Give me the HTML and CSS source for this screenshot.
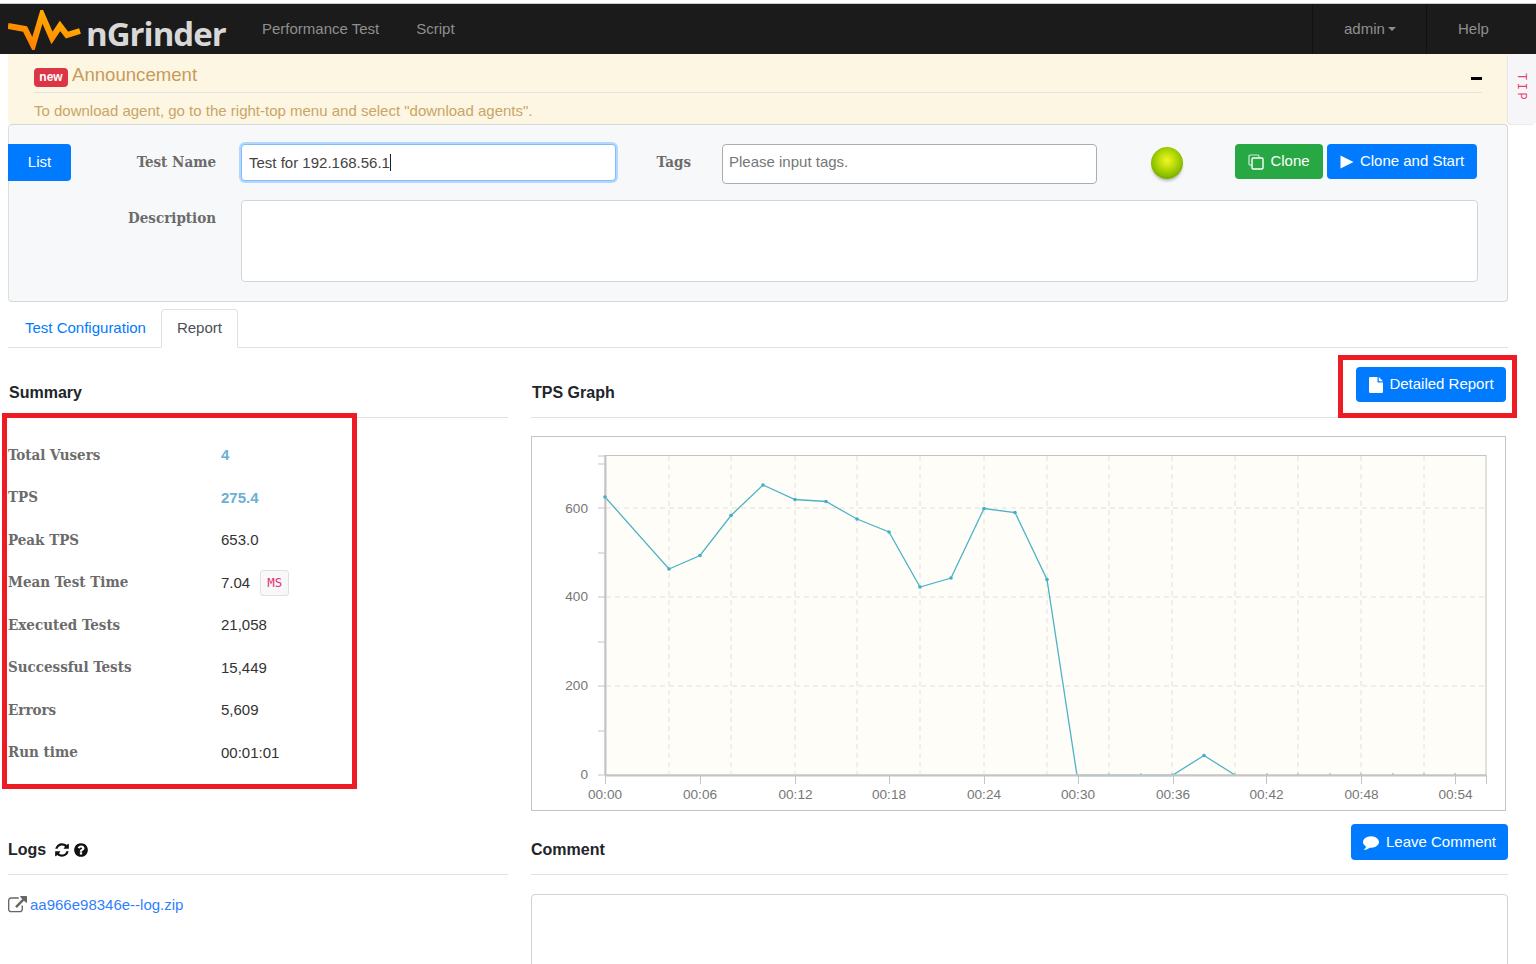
FILE: index.html
```html
<!DOCTYPE html>
<html lang="en">
<head>
<meta charset="utf-8">
<title>nGrinder</title>
<link rel="stylesheet" href="styles.css">
</head>
<body>
<nav class="nav">
  <a class="brand">
    <svg class="logo" viewBox="0 0 74 40" aria-hidden="true">
      <defs><linearGradient id="lg" x1="0" y1="1" x2="1" y2="0"><stop offset="0" stop-color="#ff7a00"/><stop offset=".6" stop-color="#ff9d00"/><stop offset="1" stop-color="#ffc000"/></linearGradient></defs>
      <polyline points="0,16 17,19 25,35 34,5 44,28 52,16 59,25 72,21" fill="none" stroke="url(#lg)" stroke-width="6" stroke-linejoin="miter"/>
    </svg>
    <span class="brand-name">nGrinder</span>
  </a>
  <a class="nav-link first">Performance Test</a>
  <a class="nav-link">Script</a>
  <div class="nav-right">
    <a class="nav-cell user">admin<i class="caret"></i></a>
    <a class="nav-cell help">Help</a>
  </div>
</nav>

<main class="main">
  <section class="announce">
    <div class="announce-head">
      <span class="badge">new</span>
      <span class="announce-title">Announcement</span>
      <b class="collapse"></b>
    </div>
    <p class="announce-text">To download agent, go to the right-top menu and select "download agents".</p>
  </section>
  <aside class="tip">TIP</aside>

  <section class="panel">
    <div class="row">
      <button class="btn list">List</button>
      <label class="lbl name-lbl">Test Name</label>
      <div class="input focus">Test for 192.168.56.1<i class="cursor"></i></div>
      <label class="lbl tags-lbl">Tags</label>
      <div class="input tags">Please input tags.</div>
      <span class="ball"></span>
      <button class="btn green clone">
        <svg class="ico" viewBox="0 0 16 16" aria-hidden="true"><path d="M11 3.500V2.200A1.200 1.200 0 0 0 9.800 1H2.200A1.200 1.200 0 0 0 1 2.200V10a1.200 1.200 0 0 0 1.200 1.200H3.500" fill="none" stroke="#cdeed5" stroke-width="1.200"/><rect x="4" y="4" width="11" height="11" rx="1.200" fill="none" stroke="#fff" stroke-width="1.400"/></svg>
        Clone</button>
      <button class="btn start">
        <svg class="ico play" viewBox="0 0 14 14" aria-hidden="true"><polygon points="0.500,0.500 13.500,7 0.500,13.500" fill="#fff"/></svg>
        Clone and Start</button>
    </div>
    <div class="row desc">
      <label class="lbl desc-lbl">Description</label>
      <div class="textarea"></div>
    </div>
  </section>

  <ul class="tabs">
    <li class="tab">Test Configuration</li>
    <li class="tab active">Report</li>
  </ul>

  <div class="report">
    <section class="col-left">
      <header class="sec-head"><h2>Summary</h2></header>
      <dl class="stats">
        <div class="stat"><dt>Total Vusers</dt><dd class="hi">4</dd></div>
        <div class="stat"><dt>TPS</dt><dd class="hi">275.4</dd></div>
        <div class="stat"><dt>Peak TPS</dt><dd>653.0</dd></div>
        <div class="stat"><dt>Mean Test Time</dt><dd>7.04<code class="unit">MS</code></dd></div>
        <div class="stat"><dt>Executed Tests</dt><dd>21,058</dd></div>
        <div class="stat"><dt>Successful Tests</dt><dd>15,449</dd></div>
        <div class="stat"><dt>Errors</dt><dd>5,609</dd></div>
        <div class="stat"><dt>Run time</dt><dd>00:01:01</dd></div>
      </dl>
    </section>
    <section class="col-right">
      <header class="sec-head graph-head">
        <h2>TPS Graph</h2>
        <button class="btn detail">
          <svg class="ico" viewBox="0 0 14 16" aria-hidden="true"><path d="M1 0H8.500V5.500H14V15a1 1 0 0 1-1 1H1a1 1 0 0 1-1-1V1a1 1 0 0 1 1-1zM9.800 0L14 4.200H9.800z" fill="#fff"/></svg>
          Detailed Report</button>
      </header>
      <div class="chart">
        <svg class="plot" viewBox="531 436 975 375" role="img" aria-label="TPS graph">
          <rect x="605" y="455.500" width="881" height="319.500" fill="#fffdf8" stroke="#c4c4c4"/>
          <g class="grid">
            <path d="M606 508H1486M606 597H1486M606 686H1486"/>
            <path d="M669 456V775M731 456V775M795 456V775M857 456V775M920 456V775M984 456V775M1047 456V775M1109 456V775M1172 456V775M1235 456V775M1298 456V775M1361 456V775M1424 456V775"/>
          </g>
          <polyline class="line" points="605,497 669,569 700,555.500 731,515.500 763,485 795,499.500 826,501.500 857,519 889,532 920,587 951,578 984,508.500 1015,512.500 1047,579.500 1077,775.500 1172,775.500 1204,755.500 1235,775"/>
          <g class="axis">
            <path class="thick" d="M605.500 455V775M605 775.500H1486"/>
            <path d="M598 456H605M598 464H605M598 508H605M598 553H605M598 597H605M598 642H605M598 686H605M598 731H605M598 775H605"/>
            <path d="M605.500 775V784M700.500 775V784M795.500 775V784M889.500 775V784M984.500 775V784M1078.500 775V784M1173.500 775V784M1266.500 775V784M1361.500 775V784M1455.500 775V784M1486.500 775V784"/>
          </g>
          <g class="dots">
            <circle cx="605" cy="497" r="1.800"/><circle cx="669" cy="569" r="1.800"/><circle cx="700" cy="555.500" r="1.800"/><circle cx="731" cy="515.500" r="1.800"/><circle cx="763" cy="485" r="1.800"/><circle cx="795" cy="499.500" r="1.800"/><circle cx="826" cy="501.500" r="1.800"/><circle cx="857" cy="519" r="1.800"/><circle cx="889" cy="532" r="1.800"/><circle cx="920" cy="587" r="1.800"/><circle cx="951" cy="578" r="1.800"/><circle cx="984" cy="508.500" r="1.800"/><circle cx="1015" cy="512.500" r="1.800"/><circle cx="1047" cy="579.500" r="1.800"/><circle cx="1204" cy="755.500" r="1.800"/>
          </g>
          <g class="dots zero">
            <circle cx="1077" cy="774" r="1"/><circle cx="1109" cy="774" r="1"/><circle cx="1141" cy="774" r="1"/><circle cx="1172" cy="774" r="1"/><circle cx="1235" cy="774" r="1"/><circle cx="1267" cy="774" r="1"/><circle cx="1298" cy="774" r="1"/><circle cx="1330" cy="774" r="1"/><circle cx="1361" cy="774" r="1"/><circle cx="1393" cy="774" r="1"/><circle cx="1424" cy="774" r="1"/><circle cx="1455" cy="774" r="1"/>
          </g>
          <g class="ylab">
            <text x="588" y="513">600</text><text x="588" y="601">400</text><text x="588" y="690">200</text><text x="588" y="779">0</text>
          </g>
          <g class="xlab">
            <text x="605" y="799">00:00</text><text x="700" y="799">00:06</text><text x="795.500" y="799">00:12</text><text x="889" y="799">00:18</text><text x="984" y="799">00:24</text><text x="1078" y="799">00:30</text><text x="1173" y="799">00:36</text><text x="1266.500" y="799">00:42</text><text x="1361.500" y="799">00:48</text><text x="1455.500" y="799">00:54</text>
          </g>
        </svg>
      </div>
    </section>

    <section class="col-left">
      <header class="sec-head low"><h2>Logs</h2>
        <svg class="head-ico refresh" viewBox="0 0 1792 1792" aria-hidden="true"><path d="M1639 1056q0 5-1 7-64 268-268 434.500t-478 166.500q-146 0-282.500-55t-243.500-157l-129 129q-19 19-45 19t-45-19-19-45v-448q0-26 19-45t45-19h448q26 0 45 19t19 45-19 45l-137 137q71 66 161 102t187 36q134 0 250-65t186-179q11-17 53-117 8-23 30-23h192q13 0 22.500 9.500t9.500 22.500zm25-800v448q0 26-19 45t-45 19h-448q-26 0-45-19t-19-45 19-45l138-138q-148-137-349-137-134 0-250 65t-186 179q-11 17-53 117-8 23-30 23h-199q-13 0-22.500-9.500t-9.500-22.500v-7q65-268 270-434.500t480-166.500q146 0 284 55.500t245 156.500l130-129q19-19 45-19t45 19 19 45z"/></svg>
        <svg class="head-ico" viewBox="0 0 1792 1792" aria-hidden="true"><path d="M1024 1376v-192q0-14-9-23t-23-9h-192q-14 0-23 9t-9 23v192q0 14 9 23t23 9h192q14 0 23-9t9-23zm256-672q0-88-55.500-163t-138.500-116-170-41q-243 0-371 213-15 24 8 42l132 100q7 6 19 6 16 0 25-12 53-68 86-92 34-24 86-24 48 0 85.500 26t37.500 59q0 38-20 61t-68 45q-63 28-115.500 86.500t-52.500 125.500v36q0 14 9 23t23 9h192q14 0 23-9t9-23q0-19 21.500-49.500t54.500-49.500q32-18 49-28.500t46-35 44.500-48 28-60.500 12.500-81zm384 192q0 209-103 385.500t-279.500 279.500-385.500 103-385.500-103-279.500-279.500-103-385.500 103-385.500 279.500-279.500 385.500-103 385.500 103 279.500 279.500 103 385.500z"/></svg>
      </header>
      <p class="log">
        <svg class="log-ico" viewBox="0 0 1792 1792" aria-hidden="true"><path d="M1408 928v320q0 119-84.500 203.500t-203.500 84.500h-832q-119 0-203.500-84.500t-84.500-203.500v-832q0-119 84.500-203.500t203.500-84.500h704q14 0 23 9t9 23v64q0 14-9 23t-23 9h-704q-66 0-113 47t-47 113v832q0 66 47 113t113 47h832q66 0 113-47t47-113v-320q0-14 9-23t23-9h64q14 0 23 9t9 23zm384-864v512q0 26-19 45t-45 19-45-19l-176-176-652 652q-10 10-23 10t-23-10l-114-114q-10-10-10-23t10-23l652-652-176-176q-19-19-19-45t19-45 45-19h512q26 0 45 19t19 45z"/></svg>
        <a class="link">aa966e98346e--log.zip</a>
      </p>
    </section>
    <section class="col-right">
      <header class="sec-head low comment-head"><h2>Comment</h2>
        <button class="btn leave">
          <svg class="ico" viewBox="0 0 1792 1792" aria-hidden="true"><path fill="#fff" d="M1792 896q0 174-120 321.500t-326 233-450 85.500q-70 0-145-8-198 175-460 242-49 14-114 22-17 2-30.500-9t-17.500-29v-1q-3-4-.5-12t2-10 4.500-9.500l6-9 7-8.500 8-9q7-8 31-34.500t34.500-38 31-39.500 32.500-51 27-59 26-76q-157-89-247.500-220t-90.500-281q0-130 71-248.500t191-204.500 286-136.500 348-50.500q244 0 450 85.500t326 233 120 321.500z"/></svg>
          Leave Comment</button>
      </header>
      <div class="comment-box"></div>
    </section>
  </div>
</main>

<div class="mark mark-summary"></div>
<div class="mark mark-detail"></div>
</body>
</html>
```

FILE: styles.css
```css
* { box-sizing: border-box; }
html, body { margin: 0; height: 964px; overflow: hidden; }
body {
  background: #fff;
  font: 15px/1.5 "Liberation Sans", Arial, sans-serif;
  color: #212529;
  padding-top: 4px;
  position: relative;
}
.nav {
  height: 50px;
  background: #1b1b1b;
  display: flex;
  align-items: center;
  padding-left: 8px;
  box-shadow: 0 -1px 0 #ccc;
}
.brand { display: flex; align-items: center; width: 219px; }
.logo { width: 74px; height: 40px; margin-top: 2px; flex: none; }
.brand-name {
  font: 700 33px/1 "Open Sans", sans-serif;
  letter-spacing: -1px;
  color: #d8d8d8;
  margin-left: 4px;
  margin-top: 8px;
}
.nav-link { color: #8f8f8f; margin-left: 35px; margin-right: 2px; }
.nav-link.first { margin-left: 35px; }
.nav-right { margin-left: auto; display: flex; height: 100%; margin-right: 0; }
.nav-cell {
  color: #8f8f8f;
  display: flex;
  align-items: center;
  border-left: 1px solid #111;
}
.user { width: 114px; padding-left: 31px; }
.help { width: 110px; padding-left: 31px; }
.caret {
  border: 4px solid transparent;
  border-top-color: #8f8f8f;
  border-bottom: 0;
  margin-left: 3px;
  margin-top: -1px;
}
.main { padding: 0 28px 0 8px; }
.announce {
  height: 70px;
  background: #fdf6e3;
  border-radius: 0 0 4px 4px;
  padding: 0 26px;
  color: #c9a567;
}
.announce-head {
  height: 39px;
  border-bottom: 1px solid #dfe3e3;
  display: flex;
  align-items: center;
  position: relative;
}
.badge {
  background: #dc3545;
  color: #fff;
  font-size: 12px;
  font-weight: 700;
  line-height: 19px;
  height: 19px;
  width: 34px;
  text-align: center;
  border-radius: 4px;
  margin-top: 8px;
}
.announce-title { font-size: 18.600px; line-height: 1; margin-left: 4px; color: #c69c5b; margin-top: 4px; }
.collapse {
  width: 11px;
  height: 3px;
  background: #000;
  margin-left: auto;
  margin-top: 10px;
}
.announce-text { margin: 7px 0 0; line-height: 22px; }
.tip {
  position: absolute;
  left: 1508px;
  top: 54px;
  width: 28px;
  height: 70px;
  background: #f6f6f9;
  border-radius: 0 0 4px 4px;
  box-shadow: -1px 1px 1px #e8e8e8;
  font: 12px/26px "Liberation Mono", monospace;
  letter-spacing: 2.500px;
  color: #e83e6c;
  writing-mode: vertical-lr;
  padding-top: 19px;
  text-align: left;
}
.panel {
  height: 178px;
  background: #f7f8fa;
  border: 1px solid #d4d7da;
  border-left-color: #dcdfe2;
  border-radius: 4px;
  margin-right: 0;
  padding-top: 19px;
}
.row { display: flex; align-items: flex-start; }
.btn {
  font: 15px/1 "Liberation Sans", Arial, sans-serif;
  border: 0;
  border-radius: 4px;
  background: #007bff;
  color: #fff;
  display: inline-flex;
  align-items: center;
  justify-content: center;
  padding: 0 0 2px;
}
.btn .ico { margin-top: 2px; }
.ico { width: 16px; height: 16px; flex: none; }
.list { width: 63px; height: 37px; margin-left: -1px; border-radius: 0 4px 4px 0; }
.lbl {
  font: 700 15px/21px "DejaVu Serif Condensed", "DejaVu Serif", serif;
  color: #6b6b6b;
  text-align: right;
  flex: none;
}
.name-lbl { width: 145px; margin-top: 8px; }
.input {
  height: 37px;
  background: #fff;
  border: 1px solid #80bdff;
  border-radius: 4px;
  box-shadow: 0 0 0 2px #b3d7ff;
  line-height: 35px;
  padding-left: 7px;
  margin-left: 25px;
  width: 375px;
  color: #444;
  flex: none;
}
.cursor { display: inline-block; width: 1px; height: 17px; background: #222; vertical-align: -3px; }
.tags-lbl { margin-left: 39px; margin-top: 8px; width: 36px; }
.tags {
  margin-left: 31px;
  height: 40px;
  border-color: #a9adb1;
  box-shadow: none;
  padding-left: 6px;
  color: #777;
  line-height: 34px;
}
.ball {
  width: 32px;
  height: 32px;
  margin: 3px 0 0 54px;
  border-radius: 50%;
  background: radial-gradient(circle at 50% 42%, #f0f52a 0, #c2e00a 30%, #8cc000 62%, #5f9400 88%, #9ab85a 100%);
  box-shadow: 0 3px 3px -1px #b5b5b5;
  flex: none;
}
.green { background: #28a745; }
.clone { width: 88px; height: 35px; margin-left: 52px; gap: 6px; }
.start { width: 150px; height: 35px; margin-left: 4px; gap: 6px; }
.play { width: 14px; height: 14px; }
.desc { margin-top: 16px; }
.desc-lbl { width: 207px; margin-top: 8px; }
.textarea {
  width: 1237px;
  height: 82px;
  margin-left: 25px;
  background: #fff;
  border: 1px solid #d2d6da;
  border-radius: 4px;
}
.tabs {
  list-style: none;
  margin: 7px 0 0;
  padding: 0;
  height: 39px;
  display: flex;
  border-bottom: 1px solid #dee2e6;
}
.tab {
  padding: 0 14px 0 16px;
  line-height: 35px;
  color: #007bff;
  height: 39px;
  border: 1px solid transparent;
  border-radius: 4px 4px 0 0;
}
.tab.active { color: #495057; background: #fff; border-color: #dee2e6 #dee2e6 #fff; padding: 0 15px; }
.report {
  display: grid;
  grid-template-columns: 500px 977px;
  grid-template-rows: 463px 1fr;
  column-gap: 23px;
}
.sec-head {
  height: 70px;
  border-bottom: 1px solid #e2e2e2;
  display: flex;
  align-items: flex-end;
  padding-bottom: 12px;
}
h2 { margin: 0; font: 700 16px/24px "Liberation Sans", Arial, sans-serif; color: #212529; padding-left: 1px; }
.low { height: 64px; padding-bottom: 12px; }
.low h2 { padding-left: 0; }
.graph-head { position: relative; }
.graph-head .detail {
  position: absolute;
  right: 2px;
  top: 19px;
}
.detail { width: 150px; height: 35px; gap: 5px; }
.stats { margin: 16px 0 0; }
.stat { display: flex; height: 42.500px; align-items: center; }
dt { width: 213px; font: 700 15px/21px "DejaVu Serif Condensed", "DejaVu Serif", serif; color: #6b6b6b; }
dd { margin: 0; display: flex; align-items: center; color: #333; }
.hi { color: #6bafd2; font-weight: 700; }
.unit {
  font: 12.500px/24px "DejaVu Sans Mono", monospace;
  color: #e6306f;
  background: #f8f8fb;
  border: 1px solid #dfdfe4;
  border-radius: 3px;
  width: 29px;
  height: 26px;
  text-align: center;
  margin-left: 10px;
}
.chart {
  margin-top: 18px;
  width: 975px;
  height: 375px;
  border: 1px solid #c4c4c4;
  overflow: hidden;
}
.plot { display: block; width: 975px; height: 375px; margin: -1px; }
.grid path { fill: none; stroke: #e2e0da; stroke-dasharray: 5 4; }
.axis path { fill: none; stroke: #c4c4c4; }
.axis .thick { stroke-width: 2; }
.line { fill: none; stroke: #4db3c8; stroke-width: 1.300; }
.dots circle { fill: #3fb0c6; }
.zero circle { fill: #a9c8cc; }
.plot text { font: 13.600px "Liberation Sans", Arial, sans-serif; fill: #777; }
.ylab text { text-anchor: end; }
.xlab text { text-anchor: middle; }
.head-ico { width: 16px; height: 16px; fill: #111; margin-bottom: 4px; flex: none; }
.refresh { margin-left: 8px; margin-right: 3px; }
.log { margin: 19px 0 0; display: flex; align-items: center; line-height: 22px; }
.log-ico { width: 19px; height: 19px; fill: #666; flex: none; margin-right: 3px; }
.link { color: #2f7fff; }
.comment-head { position: relative; }
.leave { position: absolute; right: 0; top: 13px; width: 157px; height: 36px; gap: 7px; }
.comment-box {
  margin-top: 19px;
  height: 120px;
  border: 1px solid #d2d2d8;
  border-radius: 4px;
}
.mark { position: absolute; border: 5px solid #ed1c24; pointer-events: none; }
.mark-summary { left: 2px; top: 413px; width: 355px; height: 376px; }
.mark-detail { left: 1338px; top: 355px; width: 179px; height: 63px; }
```
